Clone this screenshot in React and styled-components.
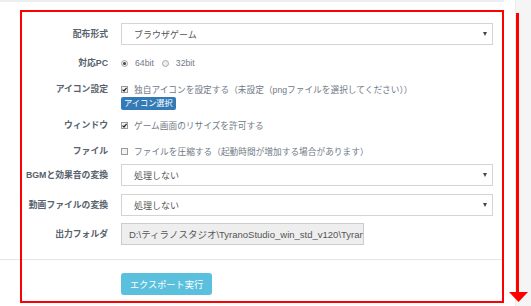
import React from 'react';
import styled, { createGlobalStyle } from 'styled-components';

const GlobalStyle = createGlobalStyle`
  html, body {
    margin: 0;
    padding: 0;
    background: #fff;
  }
  body {
    font-family: "Liberation Sans", "Noto Sans CJK JP", sans-serif;
    font-size: 9px;
    color: #555;
  }
`;

const Page = styled.div`
  position: relative;
  display: flex;
  width: 531px;
  height: 306px;
  overflow: hidden;
`;

const Panel = styled.div`
  width: 504px;
  border-top: 2px solid #eceef1;
  box-sizing: border-box;
  display: flex;
  flex-direction: column;
`;

const Gutter = styled.div`
  width: 11px;
`;

const Track = styled.div`
  flex: 1;
  background: #f5f5f5;
  border-left: 1px solid #ececec;
`;

const Form = styled.div`
  display: flex;
  flex-direction: column;
  padding: 21px 11px 0 0;
`;

const Row = styled.div`
  display: grid;
  grid-template-columns: 108px 1fr;
  column-gap: 13px;
  align-items: start;
  margin-bottom: ${p => p.$mb || 0}px;
  --lh: ${p => p.$lh}px;
`;

const Label = styled.div`
  text-align: right;
  font-weight: bold;
  font-size: 8.8px;
  color: #58626d;
  line-height: var(--lh);
  white-space: nowrap;
`;

const Control = styled.div`
  display: flex;
  flex-direction: column;
  align-items: flex-start;
`;

const Select = styled.div`
  width: 372px;
  height: 22px;
  box-sizing: border-box;
  border: 1px solid #d4d4d4;
  background: #fff;
  display: flex;
  align-items: center;
  justify-content: space-between;
  padding: 0 5px 0 12px;
  font-size: 9px;
  color: #555;
`;

const Caret = styled.span`
  width: 0;
  height: 0;
  border-left: 2.5px solid transparent;
  border-right: 2.5px solid transparent;
  border-top: 4px solid #444;
`;

const TextInput = styled.div`
  width: 243px;
  height: 22px;
  box-sizing: border-box;
  border: 1px solid #ccc;
  background: #eee;
  padding: 0 0 0 7px;
  display: flex;
  align-items: center;
  overflow: hidden;
  white-space: nowrap;
  font-size: 9.5px;
  color: #555;
`;

const Options = styled.div`
  display: flex;
  align-items: center;
  height: var(--lh);
  font-size: 8.7px;
  color: #6f7a86;
  white-space: nowrap;
`;

const Option = styled.label`
  display: flex;
  align-items: center;
  gap: ${p => (p.$check ? 6 : 7)}px;
  margin-right: 8px;
`;

const Radio = styled.span`
  width: 7px;
  height: 7px;
  box-sizing: border-box;
  border-radius: 50%;
  border: 1px solid #a8a8a8;
  background: #eeeeee;
  display: flex;
  align-items: center;
  justify-content: center;

  &::after {
    content: '';
    display: ${p => (p.$on ? 'block' : 'none')};
    width: 3px;
    height: 3px;
    border-radius: 50%;
    background: #444;
  }
`;

const Box = styled.span`
  width: 7px;
  height: 7px;
  box-sizing: border-box;
  border: 1px solid #9a9a9a;
  background: #f2f2f2;
  display: flex;
  align-items: center;
  justify-content: center;

  svg {
    display: ${p => (p.$on ? 'block' : 'none')};
  }
`;

const SmallButton = styled.div`
  height: 13px;
  padding: 0 3px;
  background: #337ab7;
  border-radius: 2px;
  color: #fff;
  font-size: 8.2px;
  line-height: 13px;
  white-space: nowrap;
`;

const Footer = styled.div`
  margin-top: 14px;
  border-top: 1px solid #e6e6e6;
  padding: 13px 0 0 121px;
`;

const ExportButton = styled.div`
  width: 91px;
  height: 22px;
  background: #5bc0de;
  border-radius: 3px;
  color: #fff;
  font-size: 9.2px;
  display: flex;
  align-items: center;
  justify-content: center;
`;

const RedFrame = styled.div`
  position: absolute;
  left: 20px;
  top: 10px;
  width: 484px;
  height: 293px;
  box-sizing: border-box;
  border: 2px solid #ff0000;
  pointer-events: none;
`;

const Arrow = styled.svg`
  position: absolute;
  left: 505px;
  top: 0;
  pointer-events: none;
`;

const Check = () => (
  <svg width="5" height="5" viewBox="0 0 5 5">
    <path d="M0.5 2.6 L2 4 L4.6 0.8" fill="none" stroke="#222" strokeWidth="1.2" />
  </svg>
);

const CheckItem = ({ on, children }) => (
  <Option $check>
    <Box $on={on}><Check /></Box>
    {children}
  </Option>
);

const App = () => {
  return (
    <>
      <GlobalStyle />
      <Page>
        <Panel>
          <Form>
            <Row $lh={22} $mb={8}>
              <Label>配布形式</Label>
              <Select>ブラウザゲーム<Caret /></Select>
            </Row>
            <Row $lh={20} $mb={8}>
              <Label>対応PC</Label>
              <Options>
                <Option><Radio $on />64bit</Option>
                <Option><Radio />32bit</Option>
              </Options>
            </Row>
            <Row $lh={16} $mb={8}>
              <Label>アイコン設定</Label>
              <Control>
                <Options>
                  <CheckItem on>独自アイコンを設定する（未設定（pngファイルを選択してください））</CheckItem>
                </Options>
                <SmallButton>アイコン選択</SmallButton>
              </Control>
            </Row>
            <Row $lh={14} $mb={12}>
              <Label>ウィンドウ</Label>
              <Options>
                <CheckItem on>ゲーム画面のリサイズを許可する</CheckItem>
              </Options>
            </Row>
            <Row $lh={14} $mb={6}>
              <Label>ファイル</Label>
              <Options>
                <CheckItem>ファイルを圧縮する（起動時間が増加する場合があります）</CheckItem>
              </Options>
            </Row>
            <Row $lh={22} $mb={8}>
              <Label>BGMと効果音の変換</Label>
              <Select>処理しない<Caret /></Select>
            </Row>
            <Row $lh={22} $mb={7}>
              <Label>動画ファイルの変換</Label>
              <Select>処理しない<Caret /></Select>
            </Row>
            <Row $lh={22}>
              <Label>出力フォルダ</Label>
              <TextInput>D:\ティラノスタジオ\TyranoStudio_win_std_v120\TyranoStudio</TextInput>
            </Row>
          </Form>
          <Footer>
            <ExportButton>エクスポート実行</ExportButton>
          </Footer>
        </Panel>
        <Gutter />
        <Track />
        <RedFrame />
        <Arrow width="26" height="306" viewBox="0 0 26 306">
          <line x1="12.5" y1="13" x2="12.5" y2="293" stroke="#ff0000" strokeWidth="3" />
          <polygon points="4,292 23,292 13.5,302" fill="#ff0000" />
        </Arrow>
      </Page>
    </>
  );
};

export default App;
